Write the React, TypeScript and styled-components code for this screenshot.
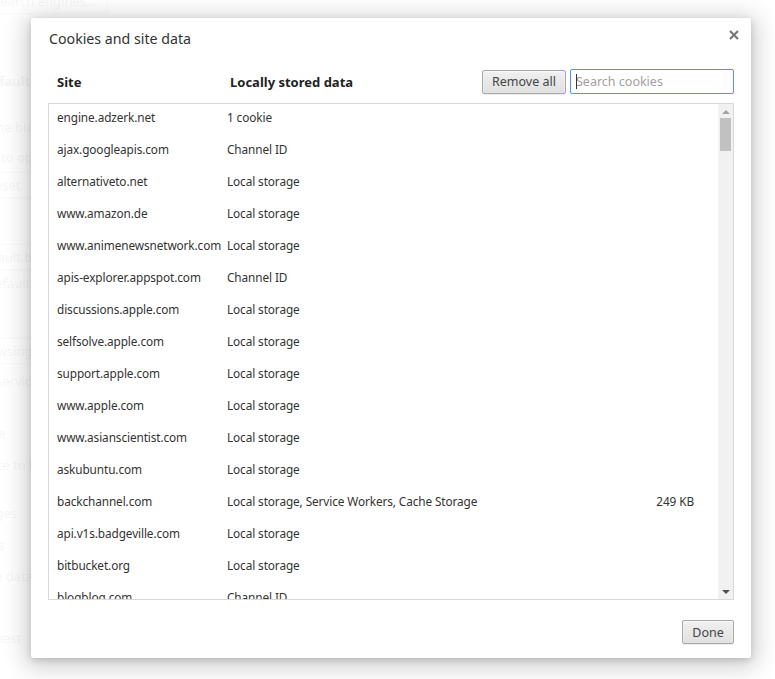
import React from 'react';
import styled, { createGlobalStyle } from 'styled-components';

const GlobalStyle = createGlobalStyle`
  html, body {
    margin: 0;
    padding: 0;
    background: #ffffff;
    font-family: 'Noto Sans', 'Open Sans', sans-serif;
    overflow: hidden;
  }
`;

const Page = styled.div`
  width: 775px;
  height: 679px;
  overflow: hidden;
  position: relative;
  background: #ffffff;
`;

const Backdrop = styled.div`
  margin-left: -70px;
  display: flex;
  flex-direction: column;
  font-size: 13px;
  color: #333;
  opacity: 0.09;
`;

const BgButton = styled.div<{ $top: number }>`
  margin-top: ${(p) => p.$top}px;
  align-self: flex-start;
  border: 1px solid #999;
  border-radius: 2px;
  padding: 3px 10px;
  line-height: 18px;
  white-space: nowrap;
`;

const BgText = styled.div<{ $top: number; $bold?: boolean }>`
  margin-top: ${(p) => p.$top}px;
  line-height: 18px;
  white-space: nowrap;
  font-weight: ${(p) => (p.$bold ? 700 : 400)};
`;

const Scrim = styled.div`
  position: absolute;
  inset: 0;
  background: rgba(255, 255, 255, 0.5);
`;

const Dialog = styled.div`
  position: absolute;
  left: 31px;
  top: 18px;
  width: 720px;
  height: 640px;
  box-sizing: border-box;
  background: #ffffff;
  border-radius: 2px;
  box-shadow: 0 4px 23px 5px rgba(0, 0, 0, 0.2), 0 2px 6px rgba(0, 0, 0, 0.15);
  padding: 0 17px 14px 17px;
  display: flex;
  flex-direction: column;
`;

const TitleBar = styled.div`
  display: flex;
  justify-content: space-between;
  padding-top: 11px;
`;

const Title = styled.h1`
  margin: 0 0 0 1px;
  font-size: 14.2px;
  font-weight: 400;
  line-height: 20px;
  color: #333;
`;

const CloseButton = styled.button`
  border: none;
  background: none;
  padding: 0;
  margin: -2px -8px 0 0;
  width: 16px;
  height: 16px;
  display: flex;
  align-items: center;
  justify-content: center;
  cursor: pointer;
`;

const Toolbar = styled.div`
  margin-top: 20px;
  height: 25px;
  display: flex;
  align-items: center;
`;

const HeadCell = styled.div<{ $width?: number }>`
  width: ${(p) => (p.$width ? `${p.$width}px` : 'auto')};
  flex: ${(p) => (p.$width ? 'none' : 1)};
  font-size: 13px;
  font-weight: 700;
  color: #222;
`;

const FirstHead = styled(HeadCell)`
  padding-left: 9px;
`;

const Button = styled.button`
  height: 24px;
  min-width: 52px;
  box-sizing: border-box;
  border: 1px solid #a8a8a8;
  border-radius: 2px;
  background: linear-gradient(#f0f0f0, #e0e0e0);
  box-shadow: 0 1px 0 rgba(0, 0, 0, 0.08), inset 0 1px 2px rgba(255, 255, 255, 0.75);
  font-family: inherit;
  font-size: 12.5px;
  color: #444;
  padding: 0 9px;
  cursor: pointer;
`;

const SearchWrap = styled.div`
  position: relative;
  margin-left: 4px;
  &::before {
    content: '';
    position: absolute;
    left: 6px;
    top: 5px;
    width: 1px;
    height: 15px;
    background: #333;
  }
`;

const SearchInput = styled.input`
  width: 164px;
  height: 25px;
  box-sizing: border-box;
  border: 1px solid #4d90fe;
  border-radius: 2px;
  outline: none;
  padding: 0 5px;
  font-family: inherit;
  font-size: 12.5px;
  color: #333;
  &::placeholder {
    color: #a0a0a0;
  }
`;

const ListBox = styled.div`
  margin-top: 9px;
  height: 497px;
  box-sizing: border-box;
  border: 1px solid #d9d9d9;
  display: flex;
  overflow: hidden;
`;

const Rows = styled.div`
  flex: 1;
  overflow: hidden;
`;

const Row = styled.div`
  display: grid;
  grid-template-columns: 170px 1fr auto;
  height: 32px;
  padding: 4px 24px 0 8px;
  box-sizing: border-box;
  font-size: 11.8px;
  letter-spacing: -0.1px;
  line-height: 18px;
  color: #333;
  white-space: nowrap;
`;

const Scrollbar = styled.div`
  width: 15px;
  background: #f1f1f1;
  display: flex;
  flex-direction: column;
  align-items: center;
`;

const Arrow = styled.div<{ $down?: boolean }>`
  width: 0;
  height: 0;
  border-left: 4px solid transparent;
  border-right: 4px solid transparent;
  ${(p) => (p.$down ? 'border-top: 4px solid #505050;' : 'border-bottom: 4px solid #a3a3a3;')}
  margin: ${(p) => (p.$down ? 'auto 0 5px' : '6px 0 0')};
`;

const Thumb = styled.div`
  margin-top: 4px;
  width: 11px;
  height: 33px;
  background: #c1c1c1;
`;

const Footer = styled.div`
  margin-top: 20px;
  display: flex;
  justify-content: flex-end;
`;

const rows: [string, string, string?][] = [
  ['engine.adzerk.net', '1 cookie'],
  ['ajax.googleapis.com', 'Channel ID'],
  ['alternativeto.net', 'Local storage'],
  ['www.amazon.de', 'Local storage'],
  ['www.animenewsnetwork.com', 'Local storage'],
  ['apis-explorer.appspot.com', 'Channel ID'],
  ['discussions.apple.com', 'Local storage'],
  ['selfsolve.apple.com', 'Local storage'],
  ['support.apple.com', 'Local storage'],
  ['www.apple.com', 'Local storage'],
  ['www.asianscientist.com', 'Local storage'],
  ['askubuntu.com', 'Local storage'],
  ['backchannel.com', 'Local storage, Service Workers, Cache Storage', '249 KB'],
  ['api.v1s.badgeville.com', 'Local storage'],
  ['bitbucket.org', 'Local storage'],
  ['blogblog.com', 'Channel ID'],
  ['blogger.com', 'Cookies'],
];

function App() {
  return (
    <Page>
      <GlobalStyle />
      <Backdrop>
        <BgButton $top={-12}>Manage search engines...</BgButton>
        <BgText $top={58} $bold>Google (default)</BgText>
        <BgText $top={28}>Enable Home button setting</BgText>
        <BgText $top={12}>Permission to open</BgText>
        <BgButton $top={6}>Import Reset</BgButton>
        <BgButton $top={46}>Make default browser</BgButton>
        <BgText $top={4}>Not your default browser</BgText>
        <BgButton $top={46}>Clear browsing data</BgButton>
        <BgText $top={8}>Use a web service</BgText>
        <BgText $top={34}>Help resolve</BgText>
        <BgText $top={14}>Use a service to help</BgText>
        <BgText $top={30}>Preload pages</BgText>
        <BgText $top={14}>Send details</BgText>
        <BgText $top={13}>Send device data</BgText>
        <BgText $top={14}>Help report</BgText>
        <BgText $top={12}>Send a request</BgText>
      </Backdrop>
      <Scrim />
      <Dialog>
        <TitleBar>
          <Title>Cookies and site data</Title>
          <CloseButton aria-label="Close">
            <svg width="10" height="10" viewBox="0 0 10 10">
              <path d="M1 1 L9 9 M9 1 L1 9" stroke="#777" strokeWidth="2.2" />
            </svg>
          </CloseButton>
        </TitleBar>
        <Toolbar>
          <FirstHead $width={173}>Site</FirstHead>
          <HeadCell>Locally stored data</HeadCell>
          <Button>Remove all</Button>
          <SearchWrap>
            <SearchInput placeholder="Search cookies" />
          </SearchWrap>
        </Toolbar>
        <ListBox>
          <Rows>
            {rows.map(([site, data, size]) => (
              <Row key={site}>
                <span>{site}</span>
                <span>{data}</span>
                <span>{size ?? ''}</span>
              </Row>
            ))}
          </Rows>
          <Scrollbar>
            <Arrow />
            <Thumb />
            <Arrow $down />
          </Scrollbar>
        </ListBox>
        <Footer>
          <Button>Done</Button>
        </Footer>
      </Dialog>
    </Page>
  );
}

export default App;
